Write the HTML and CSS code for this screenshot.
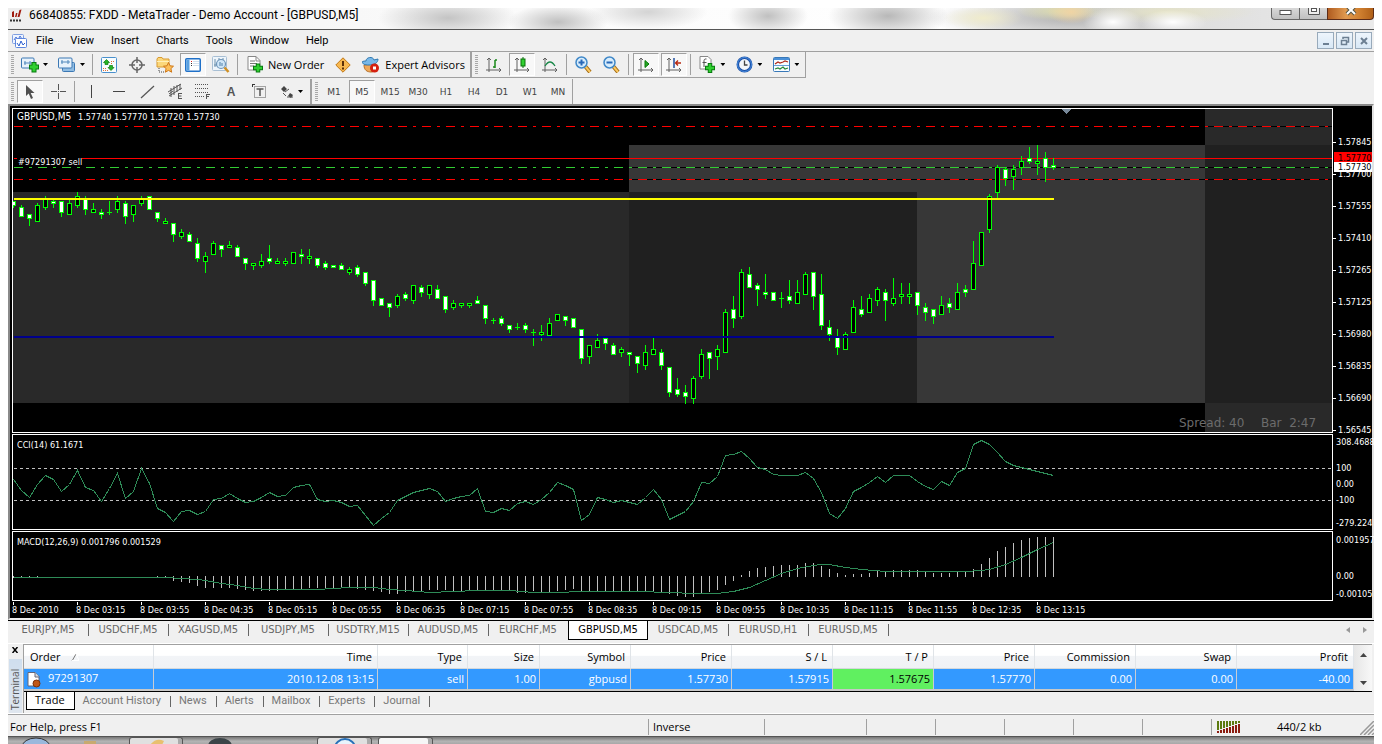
FILE: index.html
```html
<!DOCTYPE html>
<html lang="en">
<head>
<meta charset="utf-8">
<title>66840855: FXDD - MetaTrader - Demo Account - [GBPUSD,M5]</title>
<link rel="stylesheet" href="styles.css">
</head>
<body>
<div class="window">
  <header class="titlebar">
    <svg class="app-icon" width="14" height="14" viewBox="0 0 14 14"><path d="M3 8V3l2-1v6zM6 8l1-4 1.500 0L7.500 8zM8.500 8l2-7 2-.5-2 7.500z" fill="#a01c10"/><path d="M1 11.500h11" stroke="#333" stroke-width="2" stroke-dasharray="2 1"/></svg>
    <h1 class="title">66840855: FXDD - MetaTrader - Demo Account - [GBPUSD,M5]</h1>
    <div class="win-controls">
      <button class="win-btn win-min" aria-label="Minimize"><svg width="14" height="12" viewBox="0 0 14 12"><rect x="1" y="2.500" width="11" height="4" fill="#fff" stroke="#555"/></svg></button>
      <button class="win-btn win-max" aria-label="Maximize"><svg width="14" height="12" viewBox="0 0 14 12"><path d="M1.500-2v8.500h11V-2z" fill="#eee" stroke="#555"/><rect x="4.500" y=".5" width="5" height="3" fill="#fff" stroke="#555"/></svg></button>
      <button class="win-btn win-close" aria-label="Close"><svg width="14" height="12" viewBox="0 0 14 12"><path d="M3-2l8 8M11-2L3 6" stroke="#554" stroke-width="4"/><path d="M3-2l8 8M11-2L3 6" stroke="#fff" stroke-width="2"/></svg></button>
    </div>
  </header>

  <nav class="menubar">
    <svg class="doc-icon" width="15" height="14" viewBox="0 0 15 14"><rect x=".5" y=".5" width="11" height="9" rx="1" fill="#eef4ff" stroke="#7f9fe0"/><path d="M2 6l2-3 2 3 2-4 2 3" fill="none" stroke="#4a74d8"/><rect x="3.500" y="4.500" width="11" height="9" rx="1" fill="#fff" stroke="#5d86dc"/><path d="M5 9l2 3 2-5 2 4 2-2" fill="none" stroke="#2b5fd0"/></svg>
    <button class="menu">File</button><button class="menu">View</button><button class="menu">Insert</button><button class="menu">Charts</button><button class="menu">Tools</button><button class="menu">Window</button><button class="menu">Help</button>
    <div class="mdi-controls">
      <button class="mdi" aria-label="Minimize chart"><svg width="10" height="10"><path d="M2 8h6" stroke="#6c7f92" stroke-width="2"/></svg></button>
      <button class="mdi" aria-label="Restore chart"><svg width="10" height="10"><path d="M3 3V1.500h5.500V6H7" fill="none" stroke="#6c7f92" stroke-width="1.500"/><path d="M1.500 4.500h5v4h-5zM1 4.500h6" fill="none" stroke="#6c7f92" stroke-width="1.500"/></svg></button>
      <button class="mdi" aria-label="Close chart"><svg width="10" height="10"><path d="M2 2l6 6M8 2L2 8" stroke="#6c7f92" stroke-width="2"/></svg></button>
    </div>
  </nav>

  <div class="toolbar toolbar-main">
    <div class="group">
      <span class="grip"></span>
      <button class="tool drop" aria-label="New chart"><svg width="18" height="16" viewBox="0 0 18 16"><rect x=".5" y="1" width="12.500" height="10" rx="1" fill="#e8f2fb" stroke="#3c78b4"/><path d="M3 6h8M4 4v4M9 4v3" stroke="#5088bc"/><path d="M8 10h10M13 5v10.500" stroke="#087a10" stroke-width="5"/><path d="M9 10h8M13 6v8.500" stroke="#30d030" stroke-width="3"/></svg><i class="caret"></i></button>
      <button class="tool drop" aria-label="Profiles"><svg width="18" height="16" viewBox="0 0 18 16"><rect x="4.500" y="5.500" width="12" height="9" rx="1" fill="#90bce2" stroke="#3c78b4"/><rect x=".5" y="1" width="13.500" height="10" rx="1" fill="#e8f2fb" stroke="#3c78b4"/><path d="M3 5h9M4 3v4M10 3v4" stroke="#5088bc"/></svg><i class="caret"></i></button>
      <span class="sep"></span>
      <button class="tool" aria-label="Market Watch"><svg width="16" height="16" viewBox="0 0 16 16"><rect x=".5" y=".5" width="15" height="15" rx="1" fill="#f8fcff" stroke="#4a90cc"/><path d="M5.500 2.500l3 3H7v2H4v-2H2.500z" fill="#28b428" stroke="#0c7c0c" stroke-width=".7"/><path d="M10 13.500l3-3h-1.500v-2h-3v2H7z" fill="#28b428" stroke="#0c7c0c" stroke-width=".7"/><path d="M10 4.500h4M10 6.500h2M2 11.500h4M2 13.500h5" stroke="#e07038" stroke-dasharray="1 1"/></svg></button>
      <button class="tool" aria-label="Data Window"><svg width="16" height="16" viewBox="0 0 16 16"><circle cx="8" cy="8" r="5" fill="none" stroke="#666" stroke-width="1.500"/><path d="M8 0v6M8 10v6M0 8h6M10 8h6" stroke="#666" stroke-width="1.500"/></svg></button>
      <button class="tool" aria-label="Navigator"><svg width="18" height="16" viewBox="0 0 18 16"><path d="M1 2l1-1.500h4L7 2h6v8H1z" fill="#fbd77a" stroke="#d89a30"/><path d="M1 4.500h12" stroke="#fff0b8"/><path d="M3 11v4h5" fill="none" stroke="#444" stroke-dasharray="1 1"/><path d="M12.500 5.500l1.500 3.300 3.500.4-2.600 2.400.8 3.600-3.200-1.800-3.200 1.800.8-3.600-2.600-2.400 3.500-.4z" fill="#fcc05a" stroke="#d07818"/></svg></button>
      <button class="tool pressed" aria-label="Terminal" aria-pressed="true"><svg width="16" height="14" viewBox="0 0 16 14"><rect x=".75" y=".75" width="14.500" height="12.500" rx="1" fill="#fff" stroke="#1f70c8" stroke-width="1.500"/><path d="M3 1.500v11" stroke="#58a0e0" stroke-width="3"/><path d="M6 3.500h1" stroke="#e02020"/><path d="M6 5.500h1M6 7.500h1" stroke="#333"/><path d="M8 3.500h6M8 5.500h6M8 7.500h6" stroke="#d4e0ec"/></svg></button>
      <button class="tool" aria-label="Strategy Tester"><svg width="18" height="17" viewBox="0 0 18 17"><rect x=".5" y=".5" width="14" height="14" rx="1" fill="#eef5fb" stroke="#a8bfd4"/><path d="M3 3v8M2 9h3M7 2v6M11 2v4" stroke="#6c90ac"/><circle cx="9" cy="8" r="4.500" fill="#cfe6f8" stroke="#6d94b8" stroke-width="1.200"/><path d="M8 6v4M10 7v3" stroke="#5080a8"/><path d="M12.500 11.500l4 4.500" stroke="#d09024" stroke-width="2.500"/></svg></button>
      <span class="sep"></span>
      <button class="tool wide new-order"><svg width="16" height="17" viewBox="0 0 16 17"><path d="M1 .5h8l4 4V14H1z" fill="#fff" stroke="#888"/><path d="M9 .5V5h4" fill="none" stroke="#888"/><path d="M3 5h5M3 7.500h7M3 10h4" stroke="#777"/><path d="M6 12h10M11 7.500v9" stroke="#087a10" stroke-width="4.500"/><path d="M7 12h8M11 8.500v7" stroke="#30d030" stroke-width="2.500"/></svg>New Order</button>
      <button class="tool" aria-label="MetaEditor"><svg width="16" height="16" viewBox="0 0 16 16"><path d="M8 .8L15.200 8 8 15.200.8 8z" fill="#f8b850" stroke="#c07818"/><path d="M8 4v5" stroke="#5c3008" stroke-width="2"/><path d="M8 10.500v2" stroke="#5c3008" stroke-width="2"/></svg></button>
      <button class="tool wide"><svg width="18" height="16" viewBox="0 0 18 16"><path d="M2 8c0 5 3 7 7 7s6-3 5-8z" fill="#f0a858" stroke="#b87028"/><path d="M0 5c1-1 3-1 4-1 0-4 7-5 8-1l4-1c0 4-4 6-9 6S1 7 0 5z" fill="#78b8e8" stroke="#3078b0"/><circle cx="12.500" cy="11" r="4.500" fill="#d42010"/><rect x="11" y="9.500" width="3" height="3" fill="#fff"/></svg>Expert Advisors</button>
    </div>
    <div class="group">
      <span class="grip"></span>
      <button class="tool" aria-label="Bar chart"><svg width="15" height="16" viewBox="0 0 15 16"><path class="axis" d="M3 1v14M0 13h15M1 3l2-2 2 2M13 11l2 2-2 2"/><path d="M9 3v8M9 3h2M7 10h2" stroke="#188818" fill="none" stroke-width="1.500"/></svg></button>
      <button class="tool pressed" aria-label="Candlesticks" aria-pressed="true"><svg width="15" height="16" viewBox="0 0 15 16"><path class="axis" d="M3 1v14M0 13h15M1 3l2-2 2 2M13 11l2 2-2 2"/><path d="M9 0v11" stroke="#067006"/><rect x="7" y="2" width="4" height="7" fill="#30d030" stroke="#067006"/></svg></button>
      <button class="tool" aria-label="Line chart"><svg width="15" height="16" viewBox="0 0 15 16"><path class="axis" d="M3 1v14M0 13h15M1 3l2-2 2 2M13 11l2 2-2 2"/><path d="M3 9q5-8 10 0" stroke="#188848" fill="none" stroke-width="1.300"/></svg></button>
      <span class="sep"></span>
      <button class="tool" aria-label="Zoom in"><svg width="17" height="17" viewBox="0 0 17 17"><path d="M10 10l5 6" stroke="#a06810" stroke-width="4"/><path d="M10 10l5 6" stroke="#fcc860" stroke-width="2"/><circle cx="6.500" cy="6.500" r="5.500" fill="#d8edfc" stroke="#4088c8" stroke-width="1.500"/><path d="M3.500 6.500h6M6.500 3.500v6" stroke="#2868b8" stroke-width="2"/></svg></button>
      <button class="tool" aria-label="Zoom out"><svg width="17" height="17" viewBox="0 0 17 17"><path d="M10 10l5 6" stroke="#a06810" stroke-width="4"/><path d="M10 10l5 6" stroke="#fcc860" stroke-width="2"/><circle cx="6.500" cy="6.500" r="5.500" fill="#d8edfc" stroke="#4088c8" stroke-width="1.500"/><path d="M3.500 6.500h6" stroke="#2868b8" stroke-width="2"/></svg></button>
      <span class="sep"></span>
      <button class="tool pressed" aria-label="Auto scroll" aria-pressed="true"><svg width="15" height="16" viewBox="0 0 15 16"><path class="axis" d="M3 1v14M0 13h15M1 3l2-2 2 2M13 11l2 2-2 2"/><path d="M7 3.500v7L11 7z" fill="#28a828" stroke="#087808"/></svg></button>
      <button class="tool pressed" aria-label="Chart shift" aria-pressed="true"><svg width="15" height="16" viewBox="0 0 15 16"><path class="axis" d="M3 1v14M0 13h15M1 3l2-2 2 2M13 11l2 2-2 2"/><path d="M8 1v10" stroke="#2050a0" stroke-width="1.500"/><path d="M15 6h-5M12 3.500L9.500 6l2.500 2.500" fill="none" stroke="#b82810" stroke-width="1.300"/></svg></button>
      <span class="sep"></span>
      <button class="tool drop" aria-label="Indicators"><svg width="17" height="17" viewBox="0 0 17 17"><path d="M1 .5h8l3 3V13H1z" fill="#fff" stroke="#888"/><path d="M7.500 3C5 2.500 5 4 5 6v5M3.500 6.500h4" fill="none" stroke="#555"/><path d="M6 12h10M11 7v10" stroke="#087a10" stroke-width="4.500"/><path d="M7 12h8M11 8v8" stroke="#30d030" stroke-width="2.500"/></svg><i class="caret"></i></button>
      <button class="tool drop" aria-label="Periods"><svg width="17" height="17" viewBox="0 0 17 17"><circle cx="8.500" cy="8.500" r="6.700" fill="#f4f6fa" stroke="#1c50a8" stroke-width="2.600"/><circle cx="8.500" cy="8.500" r="7" fill="none" stroke="#4a90e0"/><path d="M8.500 4.500v4.500h3" fill="none" stroke="#444" stroke-width="1.300"/></svg><i class="caret"></i></button>
      <button class="tool drop" aria-label="Templates"><svg width="17" height="15" viewBox="0 0 17 15"><rect x=".5" y=".5" width="16" height="14" rx="1" fill="#f8fcff" stroke="#3878b8"/><path d="M1 2h15" stroke="#4a90d8" stroke-width="2"/><path d="M2 7l3-2 2 1 3-1 2-1 3 1" fill="none" stroke="#b02818" stroke-width="1.200"/><path d="M1 8.500h15" stroke="#68a0d8"/><path d="M2 12l3-1 2 1 3-2 2 2 3-1" fill="none" stroke="#288838" stroke-width="1.200"/></svg><i class="caret"></i></button>
    </div>
  </div>

  <div class="toolbar toolbar-draw">
    <div class="group">
      <span class="grip"></span>
      <button class="tool pressed" aria-label="Cursor" aria-pressed="true"><svg width="10" height="14" viewBox="0 0 10 14"><path d="M1 0v11l2.700-2.500L6 14l2-1-2.300-5H9.500z" fill="#505050"/></svg></button>
      <button class="tool" aria-label="Crosshair"><svg width="15" height="15" viewBox="0 0 15 15"><path d="M7.500 0v6M7.500 9v6M0 7.500h6M9 7.500h6M7 7.500h1" stroke="#555"/></svg></button>
      <span class="sep"></span>
      <button class="tool" aria-label="Vertical line"><svg width="15" height="15" viewBox="0 0 15 15"><path d="M7.500 1v13" stroke="#444"/></svg></button>
      <button class="tool" aria-label="Horizontal line"><svg width="15" height="15" viewBox="0 0 15 15"><path d="M1 7.500h12" stroke="#444"/></svg></button>
      <button class="tool" aria-label="Trendline"><svg width="15" height="15" viewBox="0 0 15 15"><path d="M1 14L14 2" stroke="#555" stroke-width="1.200"/></svg></button>
      <button class="tool" aria-label="Equidistant channel"><svg width="17" height="17" viewBox="0 0 17 17"><path d="M1 9L14 1M2 13L15 5M4 5v9M7 3v9M10 2v7M13 1v6M2 11l4-3" stroke="#555"/><path d="M11.500 10.500v5M11 10.500h4M11 13h3.500M11 15.500h4" stroke="#555"/></svg></button>
      <button class="tool" aria-label="Fibonacci retracement"><svg width="16" height="17" viewBox="0 0 16 17"><path d="M0 1.500h14M0 5.500h14M0 9.500h14M0 13.500h9" stroke="#555" stroke-dasharray="1 1"/><path d="M11.500 11v5M11 11.500h4M11 13.500h3" stroke="#555"/></svg></button>
      <button class="tool tool-text" aria-label="Text">A</button>
      <button class="tool" aria-label="Text label"><svg width="15" height="15" viewBox="0 0 15 15"><rect x="2.500" y="2.500" width="11" height="11" fill="none" stroke="#555" stroke-dasharray="1 1"/><path d="M0 .5h3M.5 0v3" stroke="#333"/><path d="M4.500 5h7M8 5v7" stroke="#555" stroke-width="1.500"/></svg></button>
      <button class="tool drop" aria-label="Arrows"><svg width="14" height="14" viewBox="0 0 14 14"><path d="M4 1l3 3-3 3-3-3zM10 8l3 2-2 3-3-2z" fill="#444"/><path d="M3 8l3 3M5 7l4-3M7 12h6" stroke="#555"/></svg><i class="caret"></i></button>
    </div>
    <div class="group">
      <span class="grip"></span>
      <button class="tool period">M1</button><button class="tool period pressed" aria-pressed="true">M5</button><button class="tool period">M15</button><button class="tool period">M30</button><button class="tool period">H1</button><button class="tool period">H4</button><button class="tool period">D1</button><button class="tool period">W1</button><button class="tool period">MN</button>
    </div>
  </div>

  <main class="chart">
    <svg class="plot plot-price" id="price" role="img" aria-label="GBPUSD M5 candlestick chart"></svg>
    <svg class="scale" id="price-scale"></svg>
    <svg class="plot plot-cci" id="cci" role="img" aria-label="CCI indicator"></svg>
    <svg class="scale" id="cci-scale"></svg>
    <svg class="plot plot-macd" id="macd" role="img" aria-label="MACD indicator"></svg>
    <svg class="scale" id="macd-scale"></svg>
    <div class="times" id="times"></div>
  </main>

  <div class="chart-tabs">
    <div class="tabs">
      <button class="tab">EURJPY,M5</button><button class="tab">USDCHF,M5</button><button class="tab">XAGUSD,M5</button><button class="tab">USDJPY,M5</button><button class="tab">USDTRY,M15</button><button class="tab">AUDUSD,M5</button><button class="tab before">EURCHF,M5</button><button class="tab active">GBPUSD,M5</button><button class="tab">USDCAD,M5</button><button class="tab">EURUSD,H1</button><button class="tab">EURUSD,M5</button>
    </div>
    <div class="tab-scroll">
      <button class="arrow" aria-label="Scroll left"><svg width="4" height="6"><path d="M4 0v6L0 3z" fill="#999"/></svg></button>
      <button class="arrow" aria-label="Scroll right"><svg width="4" height="6"><path d="M0 0v6l4-3z" fill="#999"/></svg></button>
    </div>
  </div>

  <section class="terminal">
    <div class="side">
      <button class="side-close" aria-label="Close terminal"><svg width="7" height="6"><path d="M.5 0l5 6M5.500 0l-5 6" stroke="#000" stroke-width="1.500"/></svg></button>
      <span class="side-label">Terminal</span>
    </div>
    <div class="terminal-body">
      <div class="orders-wrap">
        <table class="orders">
          <colgroup><col class="c-order"><col><col class="c-type"><col class="c-size"><col class="c-symbol"><col class="c-num"><col class="c-num"><col class="c-num"><col class="c-num"><col class="c-num"><col class="c-num"><col class="c-profit"></colgroup>
          <thead><tr><th class="left">Order <svg class="sort" width="8" height="7"><path d="M1 7l4-7" stroke="#777"/><path d="M5 0l3 6.500H1" fill="none" stroke="#fff"/></svg></th><th>Time</th><th>Type</th><th>Size</th><th>Symbol</th><th>Price</th><th>S / L</th><th>T / P</th><th>Price</th><th>Commission</th><th>Swap</th><th>Profit</th></tr></thead>
          <tbody><tr><td class="left order-cell"><svg width="15" height="16" viewBox="0 0 15 16"><path d="M1 .5h7l4 4V14H1z" fill="#fff" stroke="#667"/><path d="M8 .5V5h4" fill="#ddd" stroke="#667"/><circle cx="9.500" cy="11.500" r="3.500" fill="#c05818" stroke="#7c3008"/></svg>97291307</td><td>2010.12.08 13:15</td><td>sell</td><td>1.00</td><td>gbpusd</td><td>1.57730</td><td>1.57915</td><td class="hit">1.57675</td><td>1.57770</td><td>0.00</td><td>0.00</td><td>-40.00</td></tr></tbody>
        </table>
        <div class="scrollbar">
          <button class="arrow" aria-label="Scroll up"><svg width="7" height="4"><path d="M0 4h7L3.500 0z" fill="#444"/></svg></button>
          <button class="arrow" aria-label="Scroll down"><svg width="7" height="4"><path d="M0 0h7L3.500 4z" fill="#444"/></svg></button>
        </div>
      </div>
      <div class="panel-tabs">
        <button class="ptab active">Trade</button><button class="ptab">Account History</button><button class="ptab">News</button><button class="ptab">Alerts</button><button class="ptab">Mailbox</button><button class="ptab">Experts</button><button class="ptab">Journal</button>
      </div>
    </div>
  </section>

  <footer class="status">
    <span class="cell help">For Help, press F1</span>
    <span class="cell s1">Inverse</span><span class="cell s2"></span><span class="cell s3"></span><span class="cell s3"></span><span class="cell s3"></span><span class="cell s3"></span><span class="cell s3"></span>
    <span class="cell link"><svg id="signal" width="24" height="12"></svg><span class="traffic">440/2 kb</span><svg class="sizegrip" width="14" height="14"><path d="M0 14L14 0M4 14L14 4M8 14l6-6M12 14l2-2" stroke="#999" stroke-width="1.500"/></svg></span>
  </footer>
  <div class="taskbar">
    <svg class="orb" width="30" height="7"><ellipse cx="15" cy="10" rx="14" ry="9" fill="#9ab8dc" stroke="#333"/></svg>
    <svg class="quick" width="20" height="7"><path d="M0 4h12v3H0z" fill="#c8aa70"/></svg>
    <div class="task task-a"><svg width="16" height="7"><path d="M2 7q6-8 14-4l-2 4z" fill="#e8c070"/></svg></div>
    <svg class="round" width="26" height="7"><ellipse cx="13" cy="9" rx="12" ry="8" fill="#3c4448"/></svg>
    <div class="task task-b"><svg width="24" height="7"><ellipse cx="12" cy="10" rx="10" ry="9" fill="#e8f4fc" stroke="#2870b8" stroke-width="2"/></svg></div>
    <div class="task task-c"></div>
  </div>
</div>
<script src="chart.js"></script>
</body>
</html>
```
FILE: styles.css
```css
:root {
  --ui: "Open Sans", "Noto Sans", sans-serif;
  --narrow: Roboto, "Liberation Sans", sans-serif;
  --compact: "DejaVu Sans Condensed", "DejaVu Sans", sans-serif;
  --face: #f0f0f0;
  --line: #a0a0a0;
}
* { box-sizing: border-box; }
body { margin: 0; padding: 8px 8px 0; background: #fff; font: 11px/16px var(--ui); color: #000; }
button { font: inherit; color: inherit; background: none; border: 0; padding: 0; margin: 0; }
svg { display: block; flex: none; }
.window { background: var(--face); }

.titlebar {
  display: flex; align-items: flex-start; height: 22px; overflow: hidden;
  border-bottom: 1px solid #555;
  background:
    radial-gradient(24px 12px at 1063px 4px, #f0d4a4, transparent),
    radial-gradient(44px 10px at 1052px 3px, #dcdcae, transparent),
    radial-gradient(40px 12px at 975px 10px, #f0eccc, transparent),
    radial-gradient(30px 14px at 1105px 14px, #fff, transparent),
    radial-gradient(34px 12px at 1165px 14px, #fff, transparent),
    radial-gradient(90px 12px at 1160px 4px, #e6e4c8, transparent),
    radial-gradient(140px 24px at 1060px 10px, #b4b4b4, transparent),
    radial-gradient(60px 24px at 880px 8px, #b8b8b8, transparent),
    radial-gradient(40px 20px at 760px 8px, #c0c0c0, transparent),
    radial-gradient(60px 18px at 640px 4px, #d4d4d4, transparent),
    radial-gradient(50px 18px at 550px 14px, #c0c0c0, transparent),
    radial-gradient(70px 22px at 440px 10px, #c4c4c4, transparent),
    linear-gradient(90deg, #eee 0, #fafafa 420px, #fff 70%, #ddd 85%, #eaeaea);
}
.app-icon { margin: 1px 6px 0 1px; }
.title { margin: 0; font: 400 12px/15px var(--narrow); white-space: nowrap; }
.win-controls { display: flex; margin-left: auto; height: 12px; }
.win-btn { display: grid; place-items: start center; width: 28px; border: 1px solid #666; border-top: 0; border-right: 0; background: linear-gradient(#d8d8d8, #c0c0c0); overflow: hidden; }
.win-min { border-bottom-left-radius: 4px; }
.win-close { width: 47px; background: linear-gradient(90deg, #b05c20, #e09a50 40%, #d08030 70%, #b06018); border: 1px solid #5c2c18; border-top: 0; border-bottom-right-radius: 4px; }

.menubar { display: flex; align-items: center; height: 22px; border-bottom: 1px solid var(--line); padding: 0 2px 0 4px; }
.menu { padding: 1px 8px 0 9px; font-family: var(--narrow); }
.mdi-controls { display: flex; gap: 2px; margin-left: auto; }
.mdi { display: grid; place-items: center; width: 17px; height: 17px; border: 1px solid #98aabb; background: linear-gradient(#eef5fc, #d8e8f6); }

.toolbar { display: flex; }
.group { display: flex; align-items: center; height: 26px; margin-bottom: 1px; padding: 0 0 0 3px; border-right: 2px solid var(--line); border-bottom: 1px solid var(--line); }
.group:last-child { border-right-width: 1px; }
.toolbar-draw .group { height: 25px; margin-bottom: 0; border-bottom: 0; }
.grip { width: 3px; height: 20px; margin-right: 2px; background: repeating-linear-gradient(#a8a8a8 0 1px, transparent 1px 2px); }
.sep { width: 1px; height: 21px; margin: 0 2px; background: var(--line); }
.group + .group .sep { margin-right: 3px; }
.tool { display: flex; align-items: center; justify-content: center; width: 28px; height: 23px; flex: none; }
.tool.pressed { width: 26px; margin: 0 1px; border: 1px solid var(--line); border-right-color: #fff; border-bottom-color: #fff; background: #f8f8f8; }
.tool.drop { width: 37px; gap: 4px; }
.tool.wide { width: auto; padding: 0 5px; gap: 5px; white-space: nowrap; }
.tool.new-order { padding-left: 7px; }
.caret { width: 5px; height: 3px; background: #000; clip-path: polygon(0 0, 100% 0, 50% 100%); }
.axis { fill: none; stroke: #606060; }
.tool-text { font: 700 12px/16px "Liberation Sans", sans-serif; color: #555; }
.period { font: 9px/16px "DejaVu Sans", sans-serif; color: #444; }

.chart {
  display: grid; grid-template-columns: minmax(0, 1fr) 39px; grid-template-rows: 325px 96px 70px; row-gap: 1px;
  padding: 2px 0 0 2px; background: #000; color: #fff;
  border: 2px solid; border-color: #8a8a8a #e3e3e3 #f0f0f0 #8a8a8a;
  font: 9px/12px var(--compact);
}
.plot { width: 100%; height: 100%; border: 1px solid #fff; overflow: hidden; shape-rendering: crispEdges; }
.scale { width: 100%; height: 100%; overflow: visible; }
.plot text, .scale text { font: 9px var(--compact); fill: #fff; }
.plot .symbol { font-size: 10px; }
.plot .watermark { font: 12px "DejaVu Sans", sans-serif; fill: #6c6c6c; }
.scale .dark { fill: #000; }
.times { grid-column: 1 / -1; display: flex; height: 16px; overflow: hidden; }
.time { position: relative; flex: 0 0 64px; padding-top: 2px; white-space: nowrap; }
.time::before { content: ""; position: absolute; left: 1px; top: 0; width: 1px; height: 3px; background: #fff; }

.chart-tabs { display: flex; height: 24px; border-top: 1px solid #000; padding-right: 7px; border-bottom: 1px solid #fff; }
.tabs { display: flex; height: 19px; }
.tab { position: relative; width: 80px; padding-bottom: 2px; color: #666; font: 11px/16px var(--compact); text-align: center; }
.tab::after { content: ""; position: absolute; right: -1px; top: 3px; width: 1px; height: 12px; background: #666; }
.tab.active { padding-bottom: 1px; background: #fff; color: #000; border: solid #000; border-width: 0 1px 1px; }
.tab.active::after, .tab.before::after { display: none; }
.tab-scroll { display: flex; gap: 13px; align-items: center; margin-left: auto; height: 18px; }

.terminal { display: flex; height: 70px; border-bottom: 1px solid #fff; }
.side { display: flex; flex-direction: column; align-items: center; width: 15px; padding-top: 3px; }
.side-close { height: 6px; margin-bottom: 6px; }
.side-label { flex: 1; width: 13px; padding-top: 3px; writing-mode: vertical-rl; transform: rotate(180deg); background: linear-gradient(#dfe6ee, #cfdeee); color: #555; font: 10px/13px var(--ui); text-align: left; }
.terminal-body { flex: 1; min-width: 0; border-top: 1px solid var(--line); border-left: 1px solid var(--line); margin-right: 2px; }
.orders-wrap { display: flex; border-bottom: 1px solid #000; }
.orders { flex: 1; width: 100%; table-layout: fixed; border-collapse: separate; border-spacing: 0; background: #fff; }
.c-order { width: 130px; } .c-type { width: 90px; } .c-size { width: 72px; } .c-symbol { width: 91px; } .c-num { width: 101px; } .c-profit { width: 117px; }
th { height: 24px; padding: 0 5px 0 6px; font-weight: 400; text-align: right; background: linear-gradient(#fff 45%, #f2f4f7 50%, #f0f2f5); border-right: 1px solid #e0e4e8; border-bottom: 1px solid #d4d8dc; }
td { height: 22px; padding: 0 3px; color: #fff; text-align: right; background: #3399ff; border-right: 1px solid #c8ccd4; border-bottom: 2px solid #c8c8c8; }
th.left, td.left { text-align: left; }
td.hit { color: #000; background: #60f060; }
.order-cell svg { display: inline-block; vertical-align: middle; margin: 0 6px 0 0; }
.sort { display: inline-block; margin-left: 8px; }
.scrollbar { display: flex; flex-direction: column; justify-content: space-between; align-items: center; width: 18px; padding: 8px 0 6px; background: linear-gradient(90deg, #e6e6e6, #f8f8f8); }
.panel-tabs { display: flex; height: 19px; padding-left: 2px; }
.ptab { position: relative; height: 18px; padding: 0 10px 0 8px; color: #777; font: 11px/16px var(--narrow); }
.ptab::after { content: ""; position: absolute; right: 0; top: 4px; width: 1px; height: 11px; background: #666; }
.ptab.active { padding: 0 9px 1px 8px; font-family: var(--ui); color: #000; background: #fff; border: solid #000; border-width: 0 1px 1px; }
.ptab.active::after { display: none; }

.status { display: flex; height: 23px; padding: 4px 0 1px; border-top: 1px solid var(--line); border-bottom: 1px solid #555; }
.cell { display: flex; align-items: center; flex: none; border-left: 1px solid var(--line); padding-left: 4px; }
.help { flex: 1; border-left: 0; padding-left: 2px; }
.s1 { width: 116px; } .s2 { width: 102px; } .s3 { width: 69px; }
.link { width: 163px; padding-left: 5px; }
.traffic { margin-left: 36px; }
.sizegrip { margin-left: auto; align-self: flex-end; }

.taskbar { display: flex; height: 7px; padding-left: 13px; background: linear-gradient(#777, #b4b4b4 60%, #a8a8a8); overflow: hidden; }
.quick { margin: 0 17px 0 33px; }
.task { display: flex; justify-content: center; width: 55px; border: 1px solid #555; border-bottom: 0; border-radius: 3px 3px 0 0; background: #e0e0e0; box-shadow: inset -4px 0 #aaa; }
.task-a { width: 54px; margin-left: 8px; }
.round { margin: 0 84px 0 24px; }
.task-c { margin-left: 6px; background: #f6f6f6; }
```
FILE: chart.js
```js
const BAR = 8;                       // distance between bars
const TOP = { price: 109, cci: 435, macd: 532 };

// high, body top, body bottom, low, direction (0 up, 1 down)
const candles = [
  [201,201,206,208,1],[205,207,217,217,1],[214,214,219,226,1],[203,205,222,222,0],[196,198,208,210,0],
  [200,201,204,208,1],[201,201,213,217,1],[200,203,215,215,0],[192,196,206,208,0],[196,198,210,215,1],
  [203,209,213,213,0],[209,212,215,219,1],[201,212,213,215,0],[196,201,210,213,0],[201,203,217,224,1],
  [205,205,215,222,0],[196,198,204,206,0],[196,196,210,210,1],[212,212,219,222,1],[218,221,224,224,0],
  [223,223,235,242,1],[229,232,237,239,0],[232,234,242,242,1],[238,243,259,262,1],[252,256,262,273,0],
  [241,243,255,255,0],[245,245,250,257,1],[241,245,248,248,0],[245,247,257,257,1],[258,258,264,270,1],
  [263,263,266,270,0],[254,261,266,268,0],[245,258,262,264,1],[258,261,264,264,0],[258,261,264,266,0],
  [252,252,264,264,0],[249,254,257,264,1],[249,256,259,264,0],[258,258,266,268,1],[261,263,268,270,1],
  [265,265,268,268,1],[263,265,270,270,1],[267,269,273,275,0],[265,267,275,277,1],[272,272,284,286,1],
  [280,280,301,306,1],[298,298,306,306,1],[303,303,308,317,1],[294,296,306,308,0],[292,294,299,301,1],
  [285,285,301,304,0],[285,287,293,297,1],[285,285,295,299,0],[285,289,299,299,1],[296,296,310,313,1],
  [300,303,308,310,0],[303,303,306,308,0],[303,303,306,308,0],[296,300,304,304,1],[305,305,319,324,1],
  [318,320,321,324,0],[316,318,324,326,1],[325,325,330,333,1],[323,327,328,330,0],[323,325,330,333,1],
  [329,332,333,346,0],[325,332,335,341,0],[318,323,336,336,0],[314,314,321,321,0],[316,316,321,326,1],
  [318,318,328,328,1],[329,329,359,364,1],[345,345,357,364,0],[334,340,348,348,0],[338,338,344,350,1],
  [343,345,355,355,1],[347,349,353,357,0],[352,352,355,366,1],[356,356,364,373,1],[345,352,366,370,0],
  [338,349,355,355,0],[349,352,366,370,1],[367,367,393,397,1],[378,389,395,397,1],[385,392,397,404,1],
  [376,378,399,404,0],[349,354,377,379,0],[352,352,359,379,1],[345,349,357,370,0],[309,312,353,353,0],
  [296,309,319,328,1],[269,272,317,319,0],[267,274,288,288,1],[283,285,290,306,1],[274,292,295,299,1],
  [292,292,301,301,1],[292,298,299,308,0],[280,296,301,304,1],[280,292,304,304,0],[272,274,295,295,0],
  [272,272,297,310,1],[274,294,326,330,1],[320,327,335,341,1],[329,336,348,355,1],[332,334,350,350,0],
  [300,307,333,333,0],[296,309,315,317,1],[294,298,313,313,0],[287,289,301,306,0],[289,292,301,321,1],
  [278,298,304,306,0],[283,294,297,304,0],[283,294,297,304,0],[292,292,306,315,1],[303,307,313,321,1],
  [309,309,317,324,1],[296,305,315,315,0],[298,303,308,313,1],[283,292,310,310,0],[285,289,293,297,1],
  [241,263,290,290,0],[232,232,266,266,0],[194,196,230,233,0],[165,167,193,198,0],[167,169,179,186,1],
  [165,169,177,190,0],[156,161,168,175,0],[147,158,162,164,1],[145,161,164,175,0],[152,158,168,182,1],
  [158,165,168,170,1]
];

// indicator samples, three units to a row, counted down from row 430
const cci = [148,180,200,163,136,146,184,163,119,172,179,213,173,130,203,182,113,158,234,245,272,244,241,253,243,
  206,205,190,203,217,213,202,187,199,196,170,166,163,208,213,211,217,228,226,256,284,265,246,211,199,185,180,175,
  182,212,203,199,196,173,243,247,235,241,219,213,223,208,187,155,165,176,269,253,202,206,217,211,217,223,200,176,
  207,267,256,243,213,157,160,138,76,73,64,85,112,118,132,136,136,136,127,144,186,248,263,235,182,170,155,137,157,
  136,136,136,152,169,178,153,164,125,114,43,31,43,65,92,105,112,116,124,128,136];
const macd = [441,442,442,442,438,438,438,438,438,438,438,438,438,438,438,438,438,438,441,441,450,453,456,466,471,
  471,471,471,474,477,480,479,480,479,477,474,474,471,471,471,471,471,471,474,476,480,484,489,488,484,480,484,477,
  477,478,479,479,480,477,480,480,480,480,486,485,480,483,483,480,476,474,480,480,480,480,480,480,480,484,484,480,
  484,489,495,497,497,490,484,477,462,450,434,423,414,411,407,405,405,406,399,400,407,417,429,434,432,432,428,423,
  424,420,420,420,421,422,429,429,428,426,425,417,402,384,363,351,339,330,324,321,321,321];
const signal = [[0,442],[3,440],[17,440],[19,442],[21,444],[23,447],[24,451],[26,460],[28,466],[30,473],[32,477],
  [35,478],[38,478],[40,475],[42,472],[45,472],[47,478],[49,481],[52,485],[55,484],[58,481],[62,481],[65,485],
  [68,485],[71,482],[77,482],[78,484],[82,486],[85,490],[88,490],[90,484],[92,471],[94,449],[96,430],[98,414],
  [100,406],[101,403],[102,403],[104,410],[106,416],[109,424],[112,424],[113,422],[118,422],[119,424],[121,420],
  [122,416],[124,402],[126,380],[128,357],[130,337]];

const rect = (x, y, w, h, fill) => `<rect x="${x}" y="${y}" width="${w}" height="${h}" fill="${fill}"/>`;
const text = (x, y, s, cls = "") => `<text x="${x}" y="${y}" class="${cls}" xml:space="preserve">${s}</text>`;
const hline = (y, color, dash) =>
  `<line x1="1" x2="100%" y1="${y + 0.5}" y2="${y + 0.5}" stroke="${color}"${dash ? ` stroke-dasharray="${dash}"` : ""}/>`;
const row = (v, top) => Math.round(430 + v / 3) - top;
const put = (id, html) => { document.getElementById(id).innerHTML = html; };

// price pane
let p = "";
p += rect(0, 83, 616, 211, "#292929");
p += rect(616, 36, 288, 47, "#373737") + rect(616, 83, 288, 211, "#202020");
p += rect(904, 36, 288, 258, "#373737");
p += rect(1192, 0, "100%", "100%", "#292929") + rect(1192, 36, "100%", 258, "#202020");
for (const [y, color] of [[17, "#f00"], [58, "#32cd32"], [70, "#f00"]]) {
  p += hline(y, "#000") + hline(y, color, "9 6 3 6");
}
p += hline(49, "#f00");
candles.forEach(([h, t, b, l, down], i) => {
  const x = i * BAR, y = v => v - TOP.price;
  p += rect(x, y(h), 1, l - h, "#0f0") + rect(x - 2, y(t), 5, b - t, "#0f0");
  if (b - t > 2) p += rect(x - 1, y(t) + 1, 3, b - t - 2, down ? "#fff" : "#000");
});
p += rect(1, 89, 1040, 2, "#ff0") + rect(1, 227, 1040, 2, "#00008b");
p += rect(4, 47, 65, 10, "#000") + text(5, 56, "#97291307 sell");
p += text(4, 11, "GBPUSD,M5", "symbol") + text(65, 11, "1.57740 1.57770 1.57720 1.57730");
p += '<path d="M1048 0h11l-5.500 5z" fill="#778899"/>';
p += text(1166, 318, "Spread: 40", "watermark") + text(1248, 318, "Bar  2:47", "watermark");
put("price", p);

// price scale
let s = "";
["1.57845", "1.57700", "1.57555", "1.57410", "1.57265", "1.57125", "1.56980", "1.56835", "1.56690", "1.56545"]
  .forEach((v, i) => { s += rect(0, 34 + i * 32, 3, 1, "#fff") + text(5, 37 + i * 32, v); });
s += rect(1, 44, 38, 11, "#f00") + text(5, 53, "1.57770", "dark");
s += rect(1, 54, 38, 10, "#fff") + text(5, 62, "1.57730", "dark");
put("price-scale", s);

// CCI pane
const line = pts => `<polyline points="${pts.join(" ")}" fill="none" stroke="#2e8b57"/>`;
put("cci", hline(33, "#c0c0c0", "3 3") + hline(65, "#c0c0c0", "3 3") +
  line(cci.map((v, i) => `${i * BAR + 0.5},${row(v, TOP.cci) + 0.5}`)) +
  text(4, 13, "CCI(14) 61.1671"));
put("cci-scale", text(3, 11, "308.4688") + text(3, 37, "100") + text(3, 53, "0.00") + text(3, 69, "-100") +
  text(3, 92, "-279.224"));

// MACD pane
let m = "";
macd.forEach((v, i) => {
  const y = row(v, TOP.macd), zero = 44;
  if (y !== zero) m += rect(i * BAR, Math.min(y, zero), 1, Math.abs(y - zero) + 1, "#c0c0c0");
});
put("macd", m + line(signal.map(([i, v]) => `${i * BAR + 0.5},${row(v, TOP.macd) + 0.5}`)) +
  text(4, 13, "MACD(12,26,9) 0.001796 0.001529"));
put("macd-scale", text(3, 12, "0.001957") + text(3, 48, "0.00") + text(3, 66, "-0.00105"));

// time axis
put("times", ["2010", "03:15", "03:55", "04:35", "05:15", "05:55", "06:35", "07:15", "07:55", "08:35", "09:15",
  "09:55", "10:35", "11:15", "11:55", "12:35", "13:15"].map(t => `<span class="time">8 Dec ${t}</span>`).join(""));

// connection strength
let c = "";
for (let i = 0; i < 8; i++) {
  const low = 2 + i;
  c += rect(i * 3, 0, 2, 11 - low, "#5c7a10") + rect(i * 3, 12 - low, 2, low, "#8c1c10");
}
put("signal", c);
```
